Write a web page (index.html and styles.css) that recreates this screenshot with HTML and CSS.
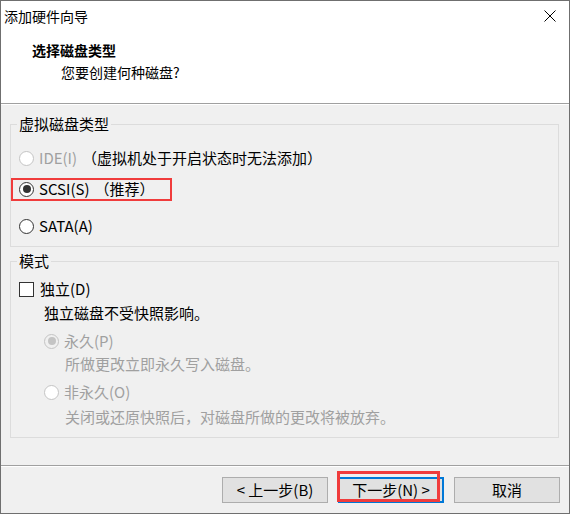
FILE: index.html
```html
<!DOCTYPE html>
<html lang="zh-CN">
<head>
<meta charset="utf-8">
<title>添加硬件向导</title>
<link rel="stylesheet" href="styles.css">
</head>
<body>
<div class="window">
  <div class="titlebar">
    <span class="title">添加硬件向导</span>
    <span class="close">
      <svg width="12" height="12" viewBox="0 0 12 12"><path d="M0.5 0.5 L11.5 11.5 M11.5 0.5 L0.5 11.5" stroke="#000" stroke-width="1" fill="none"/></svg>
    </span>
  </div>
  <div class="header">
    <div class="h-title">选择磁盘类型</div>
    <div class="h-sub">您要创建何种磁盘?</div>
  </div>
  <div class="content">
    <fieldset class="group g1">
      <legend>虚拟磁盘类型</legend>
      <div class="row r-ide">
        <span class="radio disabled"></span>
        <span class="lbl gray">IDE(I)</span>
        <span class="note">（虚拟机处于开启状态时无法添加）</span>
      </div>
      <div class="row r-scsi marked">
        <span class="radio checked"></span>
        <span class="lbl">SCSI(S)</span>
        <span class="note">（推荐）</span>
      </div>
      <div class="row r-sata">
        <span class="radio"></span>
        <span class="lbl">SATA(A)</span>
      </div>
    </fieldset>
    <fieldset class="group g2">
      <legend>模式</legend>
      <div class="row r-chk">
        <span class="checkbox"></span>
        <span class="lbl chk-lbl">独立(D)</span>
      </div>
      <div class="desc d1">独立磁盘不受快照影响。</div>
      <div class="row sub r-p">
        <span class="radio disabled checked"></span>
        <span class="lbl gray">永久(P)</span>
      </div>
      <div class="desc d2 gray">所做更改立即永久写入磁盘。</div>
      <div class="row sub r-o">
        <span class="radio disabled"></span>
        <span class="lbl gray">非永久(O)</span>
      </div>
      <div class="desc d3 gray">关闭或还原快照后，对磁盘所做的更改将被放弃。</div>
    </fieldset>
  </div>
  <div class="footer">
    <button class="btn">&lt; 上一步(B)</button>
    <button class="btn default marked2">下一步(N) &gt;</button>
    <button class="btn">取消</button>
  </div>
</div>
</body>
</html>
```
FILE: styles.css
```css
html, body {
  margin: 0;
  padding: 0;
}
body {
  width: 570px;
  height: 514px;
  font-family: "Noto Sans CJK SC", "Noto Sans", sans-serif;
  font-size: 14px;
  color: #000;
}
.window {
  box-sizing: border-box;
  width: 570px;
  height: 514px;
  border: 1px solid #6f6f6f;
  background: #f0f0f0;
  display: flex;
  flex-direction: column;
  position: relative;
}
.titlebar {
  height: 30px;
  background: #fff;
  display: flex;
  align-items: center;
  justify-content: space-between;
  padding-left: 3px;
  padding-right: 13px;
}
.title {
  line-height: 30px;
}
.close {
  display: flex;
  width: 12px;
  height: 12px;
}
.header {
  background: #fff;
  height: 73px;
  box-sizing: border-box;
  padding: 9px 0 0 31px;
  border-bottom: 1px solid #a0a0a0;
  box-shadow: 0 1px 0 #fff;
}
.h-title {
  font-weight: bold;
  line-height: 20px;
}
.h-sub {
  line-height: 20px;
  margin-top: 2px;
  margin-left: 29px;
}
.content {
  flex: 1;
  padding-top: 10px;
  font-size: 15px;
}
.group {
  margin: 0 10px 0 9px;
  padding: 0 6px;
  border: 1px solid #dcdcdc;
  min-width: 0;
}
.group legend {
  padding: 0 2px;
  line-height: 20px;
  margin-left: 0;
}
.g2 {
  margin-top: 4px;
}
.row {
  display: flex;
  align-items: center;
  height: 24px;
  position: relative;
}
.radio {
  box-sizing: border-box;
  width: 15px;
  height: 15px;
  border-radius: 50%;
  border: 1px solid #333;
  background: #fff;
  margin-left: 2px;
  display: flex;
  align-items: center;
  justify-content: center;
  flex: none;
}
.radio.checked::after {
  content: "";
  width: 8px;
  height: 8px;
  border-radius: 50%;
  background: #333;
}
.radio.disabled {
  border-color: #c4c4c4;
  background: #fff;
}
.radio.disabled.checked {
  background: #f0f0f0;
}
.radio.disabled.checked::after {
  background: #c4c4c4;
}
.lbl {
  margin-left: 5px;
  line-height: 20px;
}
.note {
  margin-left: 5px;
  line-height: 20px;
}
.gray {
  color: #a0a0a0;
}
.r-ide { margin-top: 12px; }
.r-scsi { margin-top: 7px; }
.r-sata { margin-top: 13px; margin-bottom: 8px; }

.marked::after {
  content: "";
  position: absolute;
  left: -6px;
  top: 1px;
  width: 161px;
  height: 23px;
  box-sizing: border-box;
  border: 2px solid #f03c3c;
  pointer-events: none;
}

.checkbox {
  box-sizing: border-box;
  width: 15px;
  height: 15px;
  border: 1px solid #333;
  background: #fff;
  margin-left: 2px;
  flex: none;
}
.chk-lbl {
  margin-left: 6px;
}
.r-chk { margin-top: 6px; }
.desc {
  line-height: 20px;
}
.d1 { margin-top: 2px; margin-left: 27px; }
.row.sub .radio { margin-left: 27px; }
.r-p { margin-top: 6px; }
.d2 { margin-top: 1px; margin-left: 48px; }
.r-o { margin-top: 6px; }
.d3 { margin-top: 3px; margin-left: 48px; margin-bottom: 10px; }

.footer {
  height: 48px;
  box-sizing: border-box;
  border-top: 1px solid #a0a0a0;
  box-shadow: inset 0 1px 0 #fff;
  display: flex;
  justify-content: flex-end;
  align-items: flex-start;
  gap: 10px;
  padding: 11px 9px 0 0;
}
.btn {
  width: 106px;
  height: 26px;
  box-sizing: border-box;
  background: #e1e1e1;
  border: 1px solid #adadad;
  font-family: "Noto Sans CJK SC", "Noto Sans", sans-serif;
  font-size: 15px;
  color: #000;
  padding: 0;
  line-height: 20px;
  position: relative;
}
.btn.default {
  border: 2px solid #0078d7;
}
.marked2::after {
  content: "";
  position: absolute;
  left: -3px;
  top: -8px;
  width: 103px;
  height: 31px;
  box-sizing: border-box;
  border: 3px solid #f03c3c;
  pointer-events: none;
}
```
